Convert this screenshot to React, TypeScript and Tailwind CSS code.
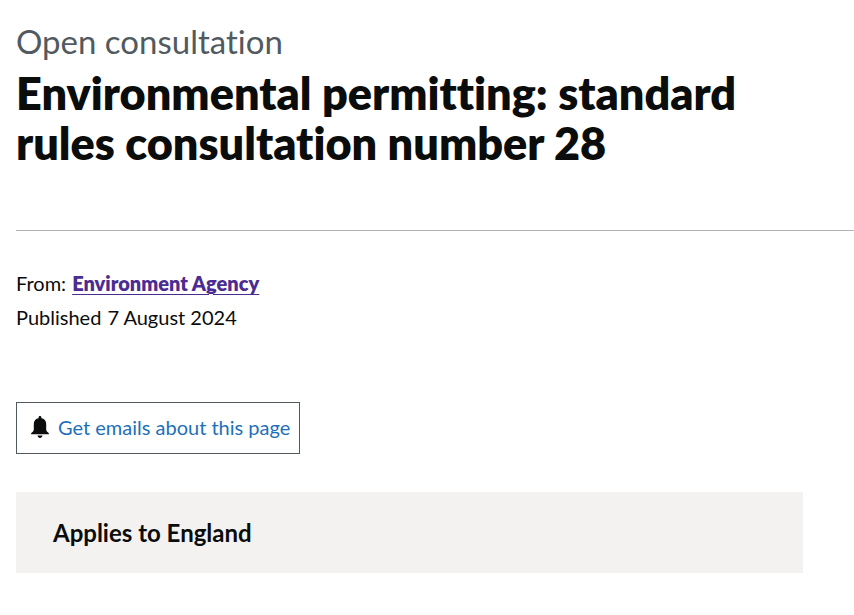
export default function App() {
    return <main className="pl-4 pt-[22px] font-['Lato','Liberation_Sans',sans-serif] text-[#0b0c0c] [font-variant-ligatures:none]">
        <header className="border-b border-[#b1b4b6] pb-[62px]">
            <span className="block text-[33px] leading-[38px] text-[#505a5f]">Open consultation</span>
            <h1 className="mt-2 max-w-[760px] text-[45px] leading-[50px] font-extrabold">Environmental permitting: standard rules consultation number 28</h1>
        </header>
        <dl className="mt-[35px] text-[20px] leading-[34px]">
            <div className="flex gap-1.5">
                <dt>From:</dt>
                <dd><a href="#agency" className="font-extrabold text-[#4c2c92] underline decoration-[#4c2c92] decoration-1 underline-offset-3">Environment Agency</a></dd>
            </div>
            <div className="flex gap-1.5">
                <dt>Published</dt>
                <dd>7 August 2024</dd>
            </div>
        </dl>
        <button type="button" className="mt-[68px] flex h-[52px] items-center gap-[9px] border border-[#505a5f] pr-[9px] pb-0.5 pl-3.5 text-[20px] whitespace-nowrap text-[#1d70b8]">
            <svg viewBox="0 0 18 22" className="h-[22px] w-[18px] shrink-0 fill-[#0b0c0c]" aria-hidden="true">
                <path d="M9 0C8.200 0 7.600.6 7.600 1.400v.8C4.800 2.600 2.800 4.800 2.800 8v5.500c0 1-.5 1.800-1.300 2.500C.6 16.700 0 17.200 0 18.200h18c0-1-.6-1.500-1.500-2.200-.8-.7-1.300-1.500-1.300-2.500V8c0-3.200-2-5.400-4.800-5.800v-.8C10.400.6 9.800 0 9 0zM6.500 19.600c.3 1.500 1.200 2.400 2.500 2.400s2.200-.9 2.500-2.400z" />
            </svg>
            Get emails about this page
        </button>
        <section className="mt-[38px] mr-[51px] bg-[#f3f2f1] px-[37px] py-[25px]">
            <h2 className="text-[24px] leading-[31px] font-bold">Applies to England</h2>
        </section>
    </main>
}
